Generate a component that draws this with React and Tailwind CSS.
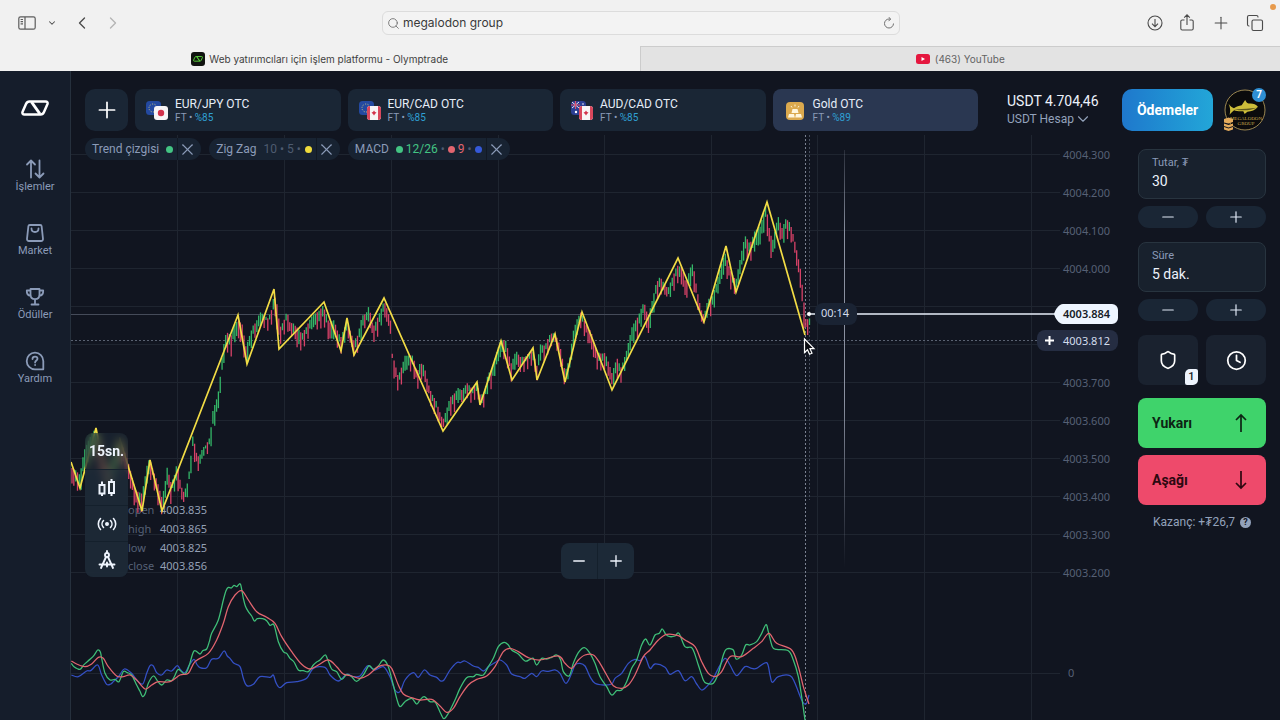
import {
  ChevronDown,
  ChevronLeft,
  ChevronRight,
  Clock,
  Copy,
  Minus,
  Plus,
  Search,
  Shield,
  X,
} from 'lucide-react';

const assets = [
  { name: 'EUR/JPY OTC', rate: '%85', icon: 'eurjpy' },
  { name: 'EUR/CAD OTC', rate: '%85', icon: 'eurcad' },
  { name: 'AUD/CAD OTC', rate: '%85', icon: 'audcad' },
  { name: 'Gold OTC', rate: '%89', icon: 'gold', active: true },
];

const priceLabels = [
  [155, '4004.300'],
  [193, '4004.200'],
  [231, '4004.100'],
  [269, '4004.000'],
  [307, ''],
  [345, ''],
  [383, '4003.700'],
  [421, '4003.600'],
  [459, '4003.500'],
  [497, '4003.400'],
  [535, '4003.300'],
  [573, '4003.200'],
];

const timeLines = [177, 284, 391, 498, 604, 711, 817, 924, 1031];

const ohlc = [
  [514, 'open', '4003.835'],
  [533, 'high', '4003.865'],
  [552, 'low', '4003.825'],
  [570, 'close', '4003.856'],
];

const zigzag =
  '71,462 80,488 96,428 108,490 120,440 142,511 150,460 162,511 238,315 247,364 274,289 279,349 324,302 341,351 347,318 354,355 384,298 443,431 477,382 480,405 501,341 512,380 533,348 537,380 555,334 565,382 582,312 612,390 678,258 704,322 726,246 736,292 767,202 805,335';

// x, high, low
const range = [
  [71, 468, 484], [76, 468, 482], [80, 472, 487], [84, 450, 470], [87, 445, 465], [96, 430, 450], [108, 470, 490],
  [120, 442, 460], [128, 460, 476], [131, 470, 485], [136, 488, 505], [142, 495, 510], [145, 480, 498], [148, 463, 480],
  [150, 462, 478], [153, 470, 480], [157, 478, 495], [162, 495, 510], [165, 482, 500], [167, 467, 482], [171, 485, 503],
  [174, 480, 490], [177, 465, 487], [180, 480, 492], [183, 491, 501], [187, 482, 493], [190, 463, 475], [193, 433, 448],
  [196, 453, 466], [199, 460, 472], [203, 450, 458], [206, 446, 452], [210, 435, 447], [213, 407, 425], [218, 392, 407],
  [220, 378, 395], [222, 358, 372], [225, 338, 356], [228, 335, 350], [231, 338, 355], [234, 325, 340], [238, 318, 335],
  [242, 320, 340], [246, 345, 362], [250, 335, 350], [253, 328, 340], [256, 325, 338], [260, 313, 325], [264, 313, 322],
  [268, 315, 323], [272, 306, 318], [274, 292, 306], [277, 305, 330], [280, 330, 345], [284, 323, 333], [287, 312, 325],
  [290, 322, 335], [293, 320, 330], [298, 325, 345], [302, 333, 345], [307, 328, 340], [312, 318, 330], [318, 310, 325],
  [323, 302, 318], [326, 310, 322], [329, 322, 340], [334, 322, 340], [338, 335, 348], [341, 338, 350], [347, 318, 330],
  [354, 338, 352], [358, 335, 348], [362, 318, 335], [366, 316, 325], [369, 306, 322], [373, 325, 338], [378, 313, 328],
  [384, 300, 312], [387, 310, 325], [391, 325, 336], [392, 355, 363], [395, 365, 382], [398, 375, 386], [401, 366, 380],
  [405, 352, 367], [409, 353, 366], [413, 356, 370], [417, 375, 390], [420, 365, 380], [424, 365, 378], [428, 380, 392],
  [431, 388, 400], [436, 398, 410], [440, 413, 425], [443, 422, 430], [447, 410, 425], [450, 398, 413], [455, 390, 405],
  [458, 384, 397], [462, 387, 400], [467, 383, 395], [472, 391, 402], [477, 384, 395], [480, 393, 403], [484, 390, 402],
  [488, 370, 384], [492, 368, 383], [496, 355, 370], [501, 342, 357], [506, 340, 357], [511, 360, 375], [516, 347, 362],
  [520, 356, 370], [525, 359, 370], [530, 353, 365], [533, 350, 362], [537, 363, 378], [540, 340, 354], [545, 343, 355],
  [550, 335, 347], [555, 335, 345], [560, 345, 360], [565, 368, 380], [570, 353, 367], [573, 330, 348], [577, 320, 334],
  [581, 314, 326], [586, 325, 337], [591, 328, 345], [597, 348, 363], [602, 353, 366], [605, 354, 368], [612, 374, 388],
  [617, 355, 372], [621, 363, 375], [626, 350, 362], [632, 328, 345], [638, 318, 335], [644, 299, 312], [648, 312, 333],
  [652, 298, 315], [656, 283, 298], [660, 278, 293], [664, 285, 296], [668, 288, 298], [672, 275, 289], [677, 261, 275],
  [682, 265, 282], [686, 285, 302], [690, 270, 285], [693, 264, 283], [697, 288, 302], [701, 305, 317], [704, 311, 321],
  [708, 296, 310], [712, 298, 313], [716, 286, 300], [720, 270, 287], [725, 250, 267], [730, 265, 280], [736, 278, 291],
  [740, 260, 276], [745, 237, 255], [750, 243, 258], [755, 226, 245], [760, 223, 241], [766, 204, 221], [770, 235, 256],
  [773, 241, 258], [778, 214, 230], [782, 224, 240], [786, 214, 230], [790, 220, 235], [794, 238, 248], [797, 253, 270],
  [801, 273, 290], [803, 293, 320], [806, 318, 332], [809, 314, 326],
];

function buildCandles() {
  const candles = [];
  let k = 0;
  let prev = 470;
  for (let i = 0; i < 404; i++) {
    const x = 72 + i * 1.83;
    while (k < range.length - 2 && range[k + 1][0] < x) k++;
    const [x0, h0, l0] = range[k];
    const [x1, h1, l1] = range[k + 1];
    const t = Math.min(1, (x - x0) / (x1 - x0));
    const shift = Math.sin(i * 12.99) * 3;
    const high = h0 + (h1 - h0) * t + shift + Math.sin(i * 37.7) * 5;
    const low = l0 + (l1 - l0) * t + shift + Math.sin(i * 78.23) * 5;
    const mid = (high + low) / 2;
    candles.push({ x, high, low, up: mid < prev });
    prev = mid;
  }
  return candles;
}

const candles = buildCandles();

// indicator traces are stored in thirds of a chart unit
const macdLine =
  '4,280 12,290 30,298 42,284 60,268 72,256 83,240 91,246 95,265 105,310 120,330 135,328 147,335 160,305 172,308 185,315 200,345 210,364 218,380 226,370 235,340 250,318 262,332 275,345 290,330 305,332 314,318 325,298 345,312 358,285 372,243 390,252 398,242 410,237 418,215 425,190 445,150 460,90 468,62 475,52 484,54 492,46 500,50 506,44 512,44 520,85 526,108 535,125 545,138 553,153 562,146 578,146 590,152 600,166 612,165 625,215 640,245 650,250 660,265 672,276 685,300 700,302 715,305 730,285 740,276 750,270 765,255 772,266 785,297 800,305 815,328 830,313 845,320 860,334 880,315 897,287 910,298 925,288 940,270 955,290 970,345 980,385 990,410 1005,395 1025,385 1040,402 1050,390 1063,380 1080,395 1095,396 1105,415 1113,432 1122,446 1135,430 1155,390 1170,355 1190,323 1210,320 1220,313 1240,315 1255,290 1270,265 1285,230 1302,217 1315,225 1325,240 1345,252 1365,273 1380,268 1390,265 1400,285 1415,265 1430,267 1445,262 1460,255 1472,270 1480,305 1498,317 1510,280 1525,248 1543,233 1560,250 1575,280 1590,320 1610,350 1625,375 1640,362 1655,360 1670,335 1685,295 1700,270 1715,225 1727,207 1740,225 1755,195 1768,190 1777,177 1788,194 1800,200 1815,198 1827,190 1845,230 1867,235 1885,285 1900,330 1910,340 1930,340 1945,310 1960,255 1970,237 1990,240 1998,267 2015,255 2027,225 2040,225 2060,215 2075,190 2088,164 2095,185 2107,230 2120,238 2155,242 2170,270 2185,320 2195,380 2205,450';
const signalLine =
  '4,273 20,282 45,290 65,282 85,262 100,265 115,290 140,318 160,320 180,315 200,330 225,357 245,345 265,335 300,335 330,315 355,310 375,275 415,250 440,210 460,160 475,110 495,75 515,62 535,90 560,125 590,142 615,160 635,200 665,245 695,283 720,297 745,285 775,270 800,290 820,312 845,318 870,325 895,315 925,290 950,285 965,295 985,345 1000,372 1025,383 1050,390 1085,388 1110,408 1130,427 1150,415 1170,380 1195,345 1220,328 1250,318 1275,290 1300,245 1320,235 1345,245 1375,263 1410,270 1465,258 1485,280 1505,295 1525,270 1545,255 1570,255 1590,280 1610,315 1630,347 1655,355 1675,345 1695,315 1720,260 1740,240 1765,210 1790,193 1825,197 1845,210 1875,230 1895,275 1915,310 1935,320 1955,305 1980,260 2015,260 2050,235 2075,215 2097,190 2120,220 2165,240 2185,290 2200,350 2217,402';
const histogramLine =
  '4,315 25,320 50,303 62,302 83,285 95,315 110,343 122,342 130,335 147,318 163,297 185,310 200,330 218,342 230,310 240,287 250,288 260,308 275,315 290,300 305,303 322,287 332,300 345,308 358,285 372,268 380,282 390,293 410,293 425,268 445,265 462,243 472,258 480,265 492,280 510,290 520,325 530,347 550,343 570,320 600,322 610,315 618,338 630,353 650,338 680,335 710,325 730,295 765,292 780,315 805,333 830,313 850,320 870,318 885,296 895,287 915,300 940,290 960,320 975,360 990,365 1005,330 1030,308 1045,322 1063,300 1080,315 1100,322 1110,332 1122,330 1140,300 1160,278 1172,278 1185,273 1210,288 1225,292 1240,303 1255,290 1275,278 1290,270 1310,285 1325,312 1350,320 1365,325 1385,310 1400,320 1415,303 1435,304 1455,300 1470,310 1488,340 1505,310 1515,285 1530,280 1545,288 1560,320 1575,340 1600,345 1625,342 1635,325 1655,310 1675,280 1695,268 1710,272 1725,260 1740,295 1755,282 1785,292 1800,313 1825,302 1845,332 1865,320 1880,342 1895,360 1910,350 1930,325 1945,295 1965,265 1980,285 2000,317 2025,290 2045,295 2060,295 2090,278 2100,315 2107,337 2125,320 2160,317 2175,340 2195,390 2208,402 2217,375';

// Catmull-Rom spline through the points
function smooth(points) {
  const p = points.split(' ').map((pair) => pair.split(',').map(Number));
  let d = `M${p[0][0]} ${p[0][1]}`;
  for (let i = 0; i < p.length - 1; i++) {
    const a = p[i - 1] || p[i];
    const b = p[i];
    const c = p[i + 1];
    const e = p[i + 2] || c;
    d += `C${b[0] + (c[0] - a[0]) / 6} ${b[1] + (c[1] - a[1]) / 6} ${c[0] - (e[0] - b[0]) / 6} ${c[1] - (e[1] - b[1]) / 6} ${c[0]} ${c[1]}`;
  }
  return d;
}

function SidebarIcon() {
  return (
    <svg width="18" height="14" viewBox="0 0 18 14" fill="none" stroke="#5c5c5c" strokeWidth="1.2">
      <rect x="0.8" y="0.8" width="16.4" height="12.4" rx="1.8" />
      <path d="M7 1v12M2.6 3.5h2.4M2.6 5.7h2.4M2.6 7.9h2.4" />
    </svg>
  );
}

function DownloadIcon() {
  return (
    <svg width="16" height="16" viewBox="0 0 16 16" fill="none" stroke="currentColor" strokeWidth="1.1">
      <circle cx="8" cy="8" r="7" />
      <path d="M8 4v7.5M5 8.7l3 3 3-3" />
    </svg>
  );
}

function ShareIcon() {
  return (
    <svg width="14" height="18" viewBox="0 0 14 18" fill="none" stroke="currentColor" strokeWidth="1.1">
      <path d="M4.5 6H2.2A1.4 1.4 0 0 0 .8 7.4v7.2A1.4 1.4 0 0 0 2.2 16h9.6a1.4 1.4 0 0 0 1.4-1.4V7.4A1.4 1.4 0 0 0 11.8 6H9.5M7 11V1M4.2 3.7 7 .9l2.8 2.8" />
    </svg>
  );
}

function BrandMark({ className }) {
  return (
    <svg className={className} viewBox="0 0 28 16" fill="none" stroke="currentColor" strokeWidth="2.5" strokeLinejoin="round">
      <path d="M8.500 1.500h16c1.700 0 2.500 1.200 1.900 2.700l-3.400 7.800c-.7 1.600-1.600 2.500-3.300 2.500H3.500c-1.700 0-2.500-1.200-1.900-2.700l3.400-7.800C5.700 2.400 6.800 1.500 8.500 1.500Z" />
      <path d="m10.500 2 8.500 12" strokeWidth="3" />
    </svg>
  );
}

function BrowserChrome() {
  return (
    <header className="bg-[#f1f1f1] font-['Inter',sans-serif] text-[#4b4b4b]">
      <div className="relative flex h-[46px] items-center pl-[18px] pr-4">
        <div className="flex flex-1 items-center">
          <button aria-label="Sidebar"><SidebarIcon /></button>
          <button aria-label="Tab groups" className="ml-[11px]"><ChevronDown size={10} strokeWidth={2.5} /></button>
          <button aria-label="Back" className="ml-[15px]"><ChevronLeft size={20} strokeWidth={1.6} /></button>
          <button aria-label="Forward" className="ml-[11px] text-[#b4b4b4]"><ChevronRight size={20} strokeWidth={1.6} /></button>
        </div>
        <label className="flex h-6 w-[518px] items-center gap-[3px] rounded-md border border-[#dcdcdc] bg-[#f3f3f3] px-1">
          <Search size={13} strokeWidth={1.6} className="text-[#6e6e6e]" />
          <input
            aria-label="Address"
            defaultValue="megalodon group"
            className="min-w-0 flex-1 bg-transparent text-[12px] text-[#3a3a3a] outline-none"
          />
          <svg width="12" height="12" viewBox="0 0 12 12" fill="none" stroke="#707070" strokeWidth="1">
            <path d="M10.500 6.500A4.500 4.500 0 1 1 6 2h1.500M5.500 0l2.200 2-2.200 2.200" />
          </svg>
        </label>
        <div className="flex flex-1 items-center justify-end gap-[15px]">
          <button aria-label="Downloads"><DownloadIcon /></button>
          <button aria-label="Share" className="px-0.5"><ShareIcon /></button>
          <button aria-label="New tab"><Plus size={20} strokeWidth={1.3} /></button>
          <button aria-label="Tab overview"><Copy size={18} strokeWidth={1.5} /></button>
        </div>
        <span className="absolute right-[4px] top-[4px] size-[6px] rounded-full bg-[#e79a4c]" />
      </div>
      <nav className="flex h-[25px] text-[10px]">
        <a href="#olymptrade" className="flex flex-1 items-center justify-center gap-1 border-t border-transparent text-[#3f3f3f]">
          <span className="flex size-[14px] items-center justify-center rounded-[3px] bg-[#101310]">
            <BrandMark className="w-[10px] text-[#5fe03f]" />
          </span>
          Web yatırımcıları için işlem platformu - Olymptrade
        </a>
        <a href="#youtube" className="flex flex-1 items-center justify-center gap-[5px] border-l border-t border-[#cccccc] bg-[#e3e3e3] text-[#636363]">
          <svg width="14" height="10" viewBox="0 0 14 10">
            <rect width="14" height="10" rx="2.5" fill="#e5173f" />
            <path d="M5.500 3v4L9 5z" fill="#fff" />
          </svg>
          (463) YouTube
        </a>
      </nav>
    </header>
  );
}

function NavIcon({ name }) {
  return (
    <svg width="20" height="20" viewBox="0 0 20 20" fill="none" stroke="currentColor" strokeWidth="1.8" strokeLinecap="round" strokeLinejoin="round">
      {name === 'trades' && <path d="M6 18.500V2M2 5.500 6 1.500l4 4M14.500 1.500V18M10.500 14.500l4 4 4-4" />}
      {name === 'market' && (
        <path d="M4.800 2h10.400c.8 0 1.300.4 1.400 1.200l1.400 12.600c.1 1.400-.6 2.200-2 2.200H4c-1.400 0-2.100-.8-2-2.200L3.400 3.200C3.500 2.400 4 2 4.800 2ZM6.500 5.500c0 2.300 1.500 3.500 3.500 3.500s3.500-1.200 3.500-3.500" />
      )}
      {name === 'rewards' && (
        <path d="M5.500 2h9v5.500c0 2.900-1.800 4.700-4.500 4.700s-4.500-1.800-4.500-4.700ZM5.500 3.500H1.800C1.600 6.300 3 8.500 5.800 8.800M14.500 3.500h3.700c.2 2.800-1.200 5-4 5.300M10 12.500V17M6.500 17.500h7" />
      )}
      {name === 'help' && (
        <>
          <path d="M18.300 18.300H10A8.300 8.300 0 1 1 18.300 10Z" />
          <path d="M7.500 8c0-1.500 1-2.400 2.500-2.400s2.500.9 2.500 2.200c0 1.700-2.400 1.800-2.400 3.700M10.100 14v.1" />
        </>
      )}
    </svg>
  );
}

function Sidebar() {
  const items = [
    ['trades', 'İşlemler'],
    ['market', 'Market'],
    ['rewards', 'Ödüller'],
    ['help', 'Yardım'],
  ];
  return (
    <aside className="flex w-[71px] shrink-0 flex-col items-center border-r border-[#26303d] bg-[#151d2b]">
      <a href="#home" aria-label="Home" className="mt-[29px] mb-[43px] text-white">
        <BrandMark className="w-7" />
      </a>
      <nav className="flex flex-col gap-6">
        {items.map(([icon, label]) => (
          <a key={icon} href={`#${icon}`} className="flex h-10 flex-col items-center text-[11px] leading-4 text-[#8b9bb8]">
            <NavIcon name={icon} />
            {label}
          </a>
        ))}
      </nav>
    </aside>
  );
}

function AssetIcon({ name }) {
  if (name === 'gold') {
    return (
      <svg width="22" height="22" viewBox="0 0 22 22">
        <rect x="2" y="2" width="18" height="18" rx="4" fill="#dba94e" />
        <path d="M8.500 9h5l1 4h-7zM5 14h5l.8 3.500H4zM12 14h5l1 3.500h-6.800z" fill="#fff6dc" />
        <path d="M11 4.500v2M7 6l1 1.500M15 6l-1 1.500" stroke="#fff6dc" />
      </svg>
    );
  }
  return (
    <svg width="22" height="20" viewBox="0 0 22 20">
      <rect width="15" height="14" rx="3.5" fill={name === 'audcad' ? '#2b3f94' : '#2349a0'} />
      {name === 'audcad' ? (
        <>
          <path d="M1 1l7 6M8 1 1 7" stroke="#e8e3f0" strokeWidth="1" />
          <path d="M4.500 0v8M0 4h9" stroke="#d8506e" strokeWidth="1.2" />
          <circle cx="5" cy="11" r="1.2" fill="#fff" />
          <circle cx="12" cy="3" r=".8" fill="#fff" />
        </>
      ) : (
        <circle cx="7" cy="7" r="4" fill="none" stroke="#d0c981" strokeDasharray="1 1.500" />
      )}
      <rect x="8" y="5" width="14" height="14" rx="3" fill="#f7f4f6" />
      {name === 'eurjpy' ? (
        <circle cx="15" cy="12" r="3.2" fill="#d3324c" />
      ) : (
        <>
          <path d="M11 5v14a3 3 0 0 1-3-3V8a3 3 0 0 1 3-3ZM19 5a3 3 0 0 1 3 3v8a3 3 0 0 1-3 3Z" fill="#d9475c" />
          <path d="M15 9.500l1 1.500 1.500.5-1.500 1.500-1 1.500-1-1.500-1.500-1.500 1.500-.5z" fill="#d3324c" />
        </>
      )}
    </svg>
  );
}

function Avatar() {
  return (
    <button aria-label="Profile" className="relative ml-[11px] size-[42px]">
      <svg viewBox="0 0 42 42">
        <circle cx="21" cy="21" r="20" fill="#0b0b0c" stroke="#9a8650" />
        <g transform="rotate(-6 21 19)">
          <path d="M5 13c2 3 3 4 5 5 3-1 5-2 8-2l4-5c1 2 1 3 3 4 4 0 7 1 9 4-3 3-7 4-11 4l-3 2-1-3c-4 0-7-1-9-2-2 1-3 2-5 4 1-3 1-4 1-5 0-2 0-4-1-6Z" fill="#cdbd3a" />
          <path d="M10 19c7 1 14 1 23 1-7 2-15 2-23-1Z" fill="#5f5a1e" />
        </g>
        <text x="22" y="31" textAnchor="middle" fontSize="5" fontFamily="Liberation Serif, serif" fill="#c9a94c">MEGALODON</text>
        <text x="22" y="36" textAnchor="middle" fontSize="5" fontFamily="Liberation Serif, serif" fill="#c9a94c">GROUP</text>
        <path d="M0 30l4.500-1.500L9 30v3l-4.500 1.500L0 33.500zM0 34.500l4.500 1.500L9 34.500v2.500l-4.500 1.500L0 37zM0 38l4.500 1.500L9 38v2.500L4.500 42 0 40.500z" fill="#e3aa5c" />
      </svg>
      <span className="absolute -top-px right-0 size-[14px] rounded-full bg-[#2f8fd3] text-center text-[10px] font-bold leading-[14px] text-white">7</span>
    </button>
  );
}

function TopBar() {
  return (
    <div className="flex h-16 items-start pl-[14px] pr-[14px] pt-[18px]">
      <div className="flex h-[42px] flex-1 gap-[7px]">
        <button aria-label="Add asset" className="flex w-[43px] shrink-0 items-center justify-center rounded-[10px] bg-[#1a2635] text-white">
          <Plus size={26} strokeWidth={1.6} />
        </button>
        {assets.map((asset) => (
          <button
            key={asset.name}
            className={`flex min-w-0 flex-1 items-center gap-[7px] rounded-lg pl-[11px] pt-0.5 text-left ${asset.active ? 'bg-[#2a3751]' : 'bg-[#1a2635]'}`}
          >
            <AssetIcon name={asset.icon} />
            <span>
              <span className="block text-[12px] leading-[14px] text-[#e6edf8]">{asset.name}</span>
              <span className="block text-[10px] leading-[14px] text-[#8b9bb8]">
                FT • <span className="text-[#2fa0d4]">{asset.rate}</span>
              </span>
            </span>
          </button>
        ))}
      </div>
      <button className="ml-[29px] w-[115px] pt-[3px] text-left">
        <span className="block text-[14px] leading-[18px] text-[#edf2fb]">USDT 4.704,46</span>
        <span className="flex items-center text-[12px] leading-[18px] text-[#93a2bb]">
          USDT Hesap <ChevronDown size={18} strokeWidth={1.5} />
        </span>
      </button>
      <button className="h-[42px] w-[91px] rounded-[10px] bg-linear-to-r from-[#1f78cc] to-[#23a6d8] text-[14px] font-bold text-white">
        Ödemeler
      </button>
      <Avatar />
    </div>
  );
}

function Dot({ className }) {
  return <span className={`size-[7px] rounded-full ${className}`} />;
}

function IndicatorPill({ name, children }) {
  return (
    <div className="flex h-[22px] text-[12px] leading-[22px] text-[#8b9bb8]">
      <button className="flex items-center gap-[7px] rounded-l-full bg-[#182332] pl-[7px] pr-1">
        {name}
        {children}
      </button>
      <button aria-label={`${name} remove`} className="flex w-6 items-center rounded-r-full border-l border-[#121924] bg-[#182332]">
        <X size={19} strokeWidth={1.4} />
      </button>
    </div>
  );
}

function Chart() {
  return (
    <svg
      className="absolute inset-0 size-full font-['Noto_Sans',sans-serif]"
      viewBox="71 135 1056 585"
      preserveAspectRatio="xMinYMin slice"
      fontSize="11"
    >
      <defs>
        <linearGradient id="expiry" x1="0" y1="150" x2="0" y2="568" gradientUnits="userSpaceOnUse">
          <stop offset="0" stopColor="#8a90a0" stopOpacity="0.2" />
          <stop offset="0.2" stopColor="#8a90a0" />
          <stop offset="0.6" stopColor="#8a90a0" />
          <stop offset="1" stopColor="#8a90a0" stopOpacity="0" />
        </linearGradient>
      </defs>

      <g stroke="#1f2530">
        {timeLines.map((x) => (
          <path key={x} d={`M${x + 0.5} 135V720`} />
        ))}
        {priceLabels.map(([y]) => (
          <path key={y} d={`M71 ${y - 0.5}H1060`} />
        ))}
        <path d="M71 673.500H1060" />
      </g>

      <g fill="#566075">
        {priceLabels.map(([y, label]) => (
          <text key={y} x="1063" y={y + 4}>{label}</text>
        ))}
        <text x="1068" y="677">0</text>
      </g>

      {ohlc.map(([y, label, value]) => (
        <g key={label}>
          <text x="128" y={y} fill="#566176">{label}</text>
          <text x="160" y={y} fill="#94a0b5">{value}</text>
        </g>
      ))}

      <path d="M71 314.500H809" stroke="#454b59" />
      <path d="M71 340.500H1037" stroke="#596171" strokeDasharray="2 2" />
      <path d="M805.500 135V720" stroke="#7b8291" strokeDasharray="2 2" />
      <path d="M809.500 135V500" stroke="#454c5b" strokeDasharray="2 2" />
      <path d="M844.500 150V568" stroke="url(#expiry)" />

      {candles.map(({ x, high, low, up }) => (
        <path key={x} d={`M${x} ${high}V${low}`} stroke={up ? '#34b868' : '#d84268'} strokeWidth="1.3" />
      ))}
      <polyline points={zigzag} fill="none" stroke="#f2dc45" strokeWidth="1.7" />

      <g transform="translate(70 570) scale(0.33333)" fill="none" strokeWidth="3.8" strokeLinejoin="round">
        <path d={smooth(histogramLine)} stroke="#3450c4" />
        <path d={smooth(macdLine)} stroke="#3fbf78" />
        <path d={smooth(signalLine)} stroke="#e2656f" />
      </g>

      <path d="M809 314H816M857 314H1056" stroke="#e6edf8" strokeWidth="1.5" />
      <circle cx="809" cy="314" r="2" fill="#fff" />
      <rect x="815" y="303" width="42" height="22" rx="8" fill="#1a2333" />
      <text x="835" y="317" textAnchor="middle" fill="#d3dcec">00:14</text>

      <path d="M1063 304h49a6 6 0 0 1 6 6v8a6 6 0 0 1-6 6h-49c-4 0-8-6-9-10 1-4 5-10 9-10Z" fill="#eef5ff" />
      <text x="1063" y="318" fill="#141a26" fontWeight="600">4003.884</text>
      <rect x="1037" y="330" width="81" height="21" rx="8" fill="#252d42" />
      <path d="M1045 340.500h9M1049.500 336v9" stroke="#fff" strokeWidth="2" />
      <text x="1063" y="345" fill="#d3dcec">4003.812</text>

      <path d="M804.500 339v13.500l3-2.800 2 4.500 2.500-1-2-4.500h4Z" fill="#0b0d13" stroke="#fff" strokeWidth="1.2" />
    </svg>
  );
}

function ChartTools() {
  const cell = 'flex h-9 w-full items-center justify-center border-t border-[#14202c] bg-[#1f2d3b99]';
  return (
    <div className="absolute bottom-[143px] left-[14px] w-[43px] overflow-hidden rounded-lg bg-[#1f2d3b80] text-[#eef4fd] backdrop-blur-[4px]">
      <button className="h-9 w-full text-[14px] font-bold">15sn.</button>
      <button aria-label="Chart type" className={cell}>
        <svg width="18" height="20" viewBox="0 0 18 20" fill="none" stroke="currentColor" strokeWidth="2">
          <path d="M1.500 7h5v8.500h-5zM4 3.500V7M4 15.500V18M11 4h5v11h-5zM13.500 1v3M13.500 15v3" />
        </svg>
      </button>
      <button aria-label="Signals" className={cell}>
        <svg width="20" height="14" viewBox="0 0 20 14" fill="none" stroke="currentColor" strokeWidth="1.6" strokeLinecap="round">
          <circle cx="10" cy="7" r="1.2" fill="currentColor" />
          <path d="M6.500 3.500a5 5 0 0 0 0 7M13.500 3.500a5 5 0 0 1 0 7M3.500 1.500a8 8 0 0 0 0 11M16.500 1.500a8 8 0 0 1 0 11" />
        </svg>
      </button>
      <button aria-label="Drawing tools" className={cell}>
        <svg width="18" height="20" viewBox="0 0 18 20" fill="none" stroke="currentColor" strokeWidth="1.9" strokeLinecap="round">
          <circle cx="9" cy="5" r="2" />
          <path d="M9 1v2M8 7 3 18M10 7l5 11M1.500 14.500h15M9 12.500v4" />
        </svg>
      </button>
    </div>
  );
}

function ChartArea() {
  return (
    <section className="relative min-h-[585px] min-w-0 flex-1 overflow-hidden">
      <Chart />
      <div className="relative flex gap-2 pl-[14px] pt-[3px]">
        <IndicatorPill name="Trend çizgisi">
          <Dot className="bg-[#43c483]" />
        </IndicatorPill>
        <IndicatorPill name="Zig Zag">
          <span className="flex items-center gap-1 text-[#4e5b70]">
            10 • 5 • <Dot className="bg-[#f0dc3c]" />
          </span>
        </IndicatorPill>
        <IndicatorPill name="MACD">
          <span className="flex items-center gap-[3px]">
            <Dot className="bg-[#43c483]" />
            <span className="text-[#43c483]">12/26</span>
            <span className="text-[#4e5b70]">•</span>
            <Dot className="bg-[#e2656f]" />
            <span className="text-[#e2656f]">9</span>
            <span className="text-[#4e5b70]">•</span>
            <Dot className="bg-[#3559d8]" />
          </span>
        </IndicatorPill>
      </div>
      <ChartTools />
      <div className="absolute bottom-[141px] left-[490px] flex h-9 w-[73px] overflow-hidden rounded-lg bg-[#1c2937] text-[#eef4fd]">
        <button aria-label="Zoom out" className="flex flex-1 items-center justify-center border-r border-[#14202c]"><Minus size={18} strokeWidth={1.8} /></button>
        <button aria-label="Zoom in" className="flex flex-1 items-center justify-center"><Plus size={18} strokeWidth={1.8} /></button>
      </div>
    </section>
  );
}

function Stepper({ label }) {
  const button = 'flex h-[22px] flex-1 items-center justify-center rounded-full bg-[#1a2635] text-[#dfe8f6]';
  return (
    <div className="mt-[7px] mb-[14px] flex gap-2">
      <button aria-label={`${label} -`} className={button}><Minus size={18} strokeWidth={1.6} /></button>
      <button aria-label={`${label} +`} className={button}><Plus size={18} strokeWidth={1.6} /></button>
    </div>
  );
}

function Field({ label, value }) {
  return (
    <label className="block h-[50px] rounded-lg border border-[#28343f] bg-[#18212d] px-[13px] pt-[5px] text-[11px] leading-4 text-[#8b9bb8]">
      {label}
      <input defaultValue={value} className="block h-5 w-full bg-transparent text-[14px] text-[#edf2fb] outline-none" />
    </label>
  );
}

function LongArrow({ className }) {
  return (
    <svg width="12" height="20" viewBox="0 0 12 20" fill="none" stroke="currentColor" strokeWidth="1.7" className={className}>
      <path d="M6 19V2M1 7l5-5 5 5" />
    </svg>
  );
}

function TradePanel() {
  return (
    <aside className="w-[153px] shrink-0 pl-[11px] pr-[14px] pt-[14px]">
      <Field label="Tutar, ₮" value="30" />
      <Stepper label="Tutar" />
      <Field label="Süre" value="5 dak." />
      <Stepper label="Süre" />
      <div className="mb-[13px] flex gap-2">
        <button aria-label="Protection" className="relative flex h-[50px] flex-1 items-center justify-center rounded-lg bg-[#1a222f] text-white">
          <Shield size={20} strokeWidth={2} />
          <span className="absolute bottom-0 right-0 h-4 w-[13px] rounded-tl-[5px] rounded-br-[5px] rounded-tr-[2px] rounded-bl-[2px] bg-[#eef4fd] text-center text-[11px] font-medium leading-4 text-[#141a26]">1</span>
        </button>
        <button aria-label="Pending order" className="flex h-[50px] flex-1 items-center justify-center rounded-lg bg-[#1a222f] text-white">
          <Clock size={21} strokeWidth={2} />
        </button>
      </div>
      <button className="flex h-[50px] w-full items-center justify-between rounded-lg bg-[#3fd36b] pl-[14px] pr-[19px] text-[14px] font-bold text-[#0d2414]">
        Yukarı <LongArrow />
      </button>
      <button className="mt-[7px] flex h-[50px] w-full items-center justify-between rounded-lg bg-[#ee4a6b] pl-[14px] pr-[19px] text-[14px] font-bold text-[#2c0810]">
        Aşağı <LongArrow className="rotate-180" />
      </button>
      <p className="mt-[9px] flex items-center justify-center gap-[5px] text-[12px] leading-4 text-[#93a2bb]">
        Kazanç: +₮26,7
        <span className="size-[11px] rounded-full bg-[#93a2bb] text-center text-[9px] font-bold leading-[11px] text-[#11151f]">?</span>
      </p>
    </aside>
  );
}

export default function App() {
  return (
    <div className="flex min-h-screen flex-col bg-[#111520] font-['Roboto',sans-serif]">
      <BrowserChrome />
      <div className="flex flex-1">
        <Sidebar />
        <main className="flex min-w-0 flex-1 flex-col">
          <TopBar />
          <div className="flex flex-1">
            <ChartArea />
            <TradePanel />
          </div>
        </main>
      </div>
    </div>
  );
}
